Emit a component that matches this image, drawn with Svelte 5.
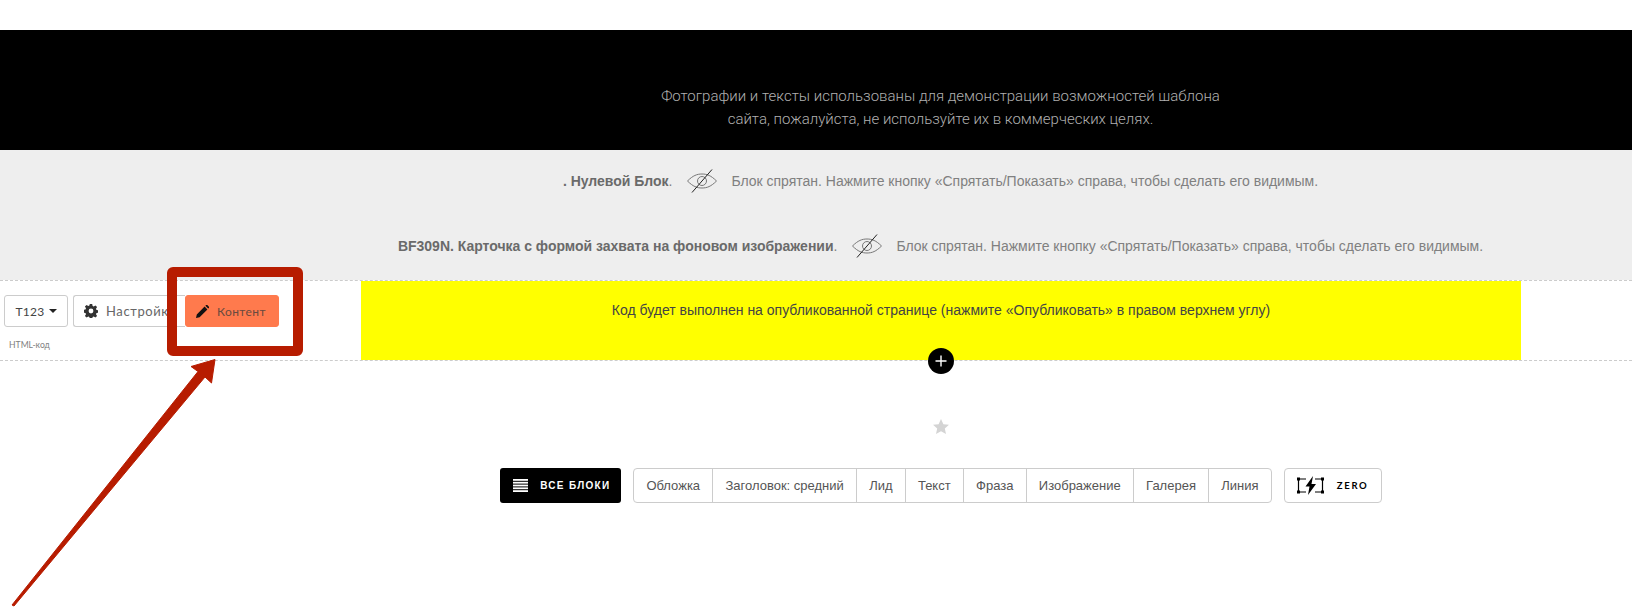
<script lang="ts">
  const tabs = ['Обложка', 'Заголовок: средний', 'Лид', 'Текст', 'Фраза', 'Изображение', 'Галерея', 'Линия']
  const hidden = [
    { title: '. Нулевой Блок' },
    { title: 'BF309N. Карточка с формой захвата на фоновом изображении' },
  ]
</script>

<style>
  :global(body) { margin: 0; background: #fff; }

  .page {
    position: relative;
    width: 1632px;
    height: 613px;
    overflow: hidden;
    padding-top: 30px;
    box-sizing: border-box;
    font-family: "Liberation Sans", Arial, sans-serif;
  }

  .notice {
    height: 120px;
    box-sizing: border-box;
    background: #000;
    padding: 55px 111px 0 360px;
    text-align: center;
    font-family: Roboto, sans-serif;
    font-weight: 300;
    font-size: 15px;
    line-height: 23px;
    color: #b0b0b0;
  }

  .hidden-blocks {
    height: 130px;
    background: #eee;
    padding-left: 360px;
    padding-right: 111px;
  }
  .hidden-row {
    height: 65px;
    padding-bottom: 3px;
    box-sizing: border-box;
    display: flex;
    align-items: center;
    justify-content: center;
    font-size: 14px;
    letter-spacing: -0.01px;
    color: #808080;
    white-space: nowrap;
  }
  .hidden-row b { color: #6a6a6a; }
  .eye { margin: 0 14px 0 15px; flex: none; }

  .html-row {
    display: flex;
    height: 81px;
    box-sizing: border-box;
    border-top: 1px dashed #ccc;
    border-bottom: 1px dashed #ccc;
  }
  .panel {
    width: 361px;
    flex: none;
    padding: 14px 0 0 4px;
    box-sizing: border-box;
    font-family: Lato, sans-serif;
  }
  .tools { display: flex; height: 32px; }
  .tool {
    box-sizing: border-box;
    height: 32px;
    border: 1px solid #ccc;
    border-radius: 3px;
    background: #fff;
    display: flex;
    align-items: center;
    font-size: 13px;
    color: #666;
    letter-spacing: 0.6px;
    white-space: nowrap;
  }
  .type { width: 64px; justify-content: center; gap: 4px; color: #444; margin-right: 5px; font-size: 12px; letter-spacing: 0.3px; }
  .caret { width: 0; height: 0; border: 4px solid transparent; border-top-color: #222; border-bottom: 0; }
  .settings { width: 112px; padding-left: 10px; gap: 8px; overflow: hidden; border-right: 0; border-radius: 3px 0 0 3px; }
  .content {
    width: 94px;
    padding-left: 10px;
    gap: 8px;
    background: #ff7a4d;
    border-color: #ff7a4d;
    color: #6a4a3f;
    font-size: 12px;
    letter-spacing: 0.4px;
  }
  .label { margin: 12px 0 0 5px; font-size: 8.6px; line-height: 12px; color: #808080; }

  .code {
    width: 1160px;
    background: #ff0;
    padding-top: 17px;
    box-sizing: border-box;
    text-align: center;
    font-size: 14px;
    line-height: 24px;
    color: #444;
  }

  .add {
    position: absolute;
    left: 928px;
    top: 348px;
    width: 26px;
    height: 26px;
    border-radius: 50%;
    background: #000;
    display: flex;
    align-items: center;
    justify-content: center;
  }

  .library {
    padding-left: 361px;
    padding-right: 111px;
    display: flex;
    flex-direction: column;
    align-items: center;
  }
  .star { margin-top: 58px; display: block; }

  .bar { display: flex; margin-top: 34px; height: 35px; }
  .all {
    width: 121px;
    box-sizing: border-box;
    background: #000;
    border-radius: 3px;
    display: flex;
    align-items: center;
    padding-left: 13px;
    gap: 12px;
    color: #fff;
    font-size: 10px;
    font-weight: 700;
    letter-spacing: 1.3px;
    margin-right: 12px;
  }
  .tabs {
    display: flex;
    border: 1px solid #ccc;
    border-radius: 4px;
    margin-right: 12px;
  }
  .tab {
    padding: 0 12.2px;
    display: flex;
    align-items: center;
    font-size: 13px;
    color: #555;
    border-left: 1px solid #ccc;
    white-space: nowrap;
  }
  .tab:first-child { border-left: 0; }
  .zero {
    width: 98px;
    box-sizing: border-box;
    border: 1px solid #ccc;
    border-radius: 4px;
    display: flex;
    align-items: center;
    padding-left: 12px;
    gap: 13px;
    font-family: Lato, sans-serif;
    font-weight: 700;
    font-size: 9.5px;
    letter-spacing: 1.7px;
    color: #000;
  }

  .frame {
    position: absolute;
    left: 167px;
    top: 267px;
    width: 136px;
    height: 89px;
    box-sizing: border-box;
    border: 10px solid #b71c00;
    border-radius: 6px;
    pointer-events: none;
  }
  .arrow { position: absolute; left: 0; top: 340px; }
</style>

<div class="page">
  <div class="notice">
    Фотографии и тексты использованы для демонстрации возможностей шаблона<br />
    сайта, пожалуйста, не используйте их в коммерческих целях.
  </div>

  <div class="hidden-blocks">
    {#each hidden as block}
      <div class="hidden-row">
        <b>{block.title}</b>.
        <svg class="eye" width="30" height="24" viewBox="0 0 30 24" fill="none" stroke="#777" stroke-width="1">
          <path d="M0.500 12 C6 6.500 10 5 15 5 C20 5 24 6.500 29.500 12 C24 17.500 20 19 15 19 C10 19 6 17.500 0.500 12 Z" />
          <circle cx="15" cy="12" r="4.500" />
          <path d="M5 23.500 L25 0.500" stroke="#222" />
        </svg>
        Блок спрятан. Нажмите кнопку «Спрятать/Показать» справа, чтобы сделать его видимым.
      </div>
    {/each}
  </div>

  <div class="html-row">
    <div class="panel">
      <div class="tools">
        <div class="tool type">T123 <span class="caret"></span></div>
        <div class="tool settings">
          <svg width="14" height="14" viewBox="0 0 14 14">
            <path fill="#333" fill-rule="evenodd" d="M5.800 0h2.400l.4 2 1.100.5 1.700-1.100 1.700 1.700-1.100 1.700.5 1.100 2 .4v2.400l-2 .4-.5 1.100 1.100 1.700-1.700 1.700-1.700-1.100-1.100.5-.4 2H5.800l-.4-2-1.100-.5-1.700 1.100-1.700-1.700 1.100-1.700-.5-1.100-2-.4V5.800l2-.4.5-1.100-1.100-1.700 1.700-1.700 1.700 1.100 1.100-.5zM7 4.600a2.400 2.400 0 1 0 0 4.800 2.400 2.400 0 0 0 0-4.800z" />
          </svg>
          Настройки
        </div>
        <div class="tool content">
          <svg width="13" height="13" viewBox="0 0 13 13">
            <path fill="#111" d="M0 13l.8-3.600L8.600 1.600l2.800 2.800-7.800 7.800zM9.400.8l.7-.7a.9.9 0 0 1 1.200 0l1.600 1.600a.9.9 0 0 1 0 1.200l-.7.7z" />
          </svg>
          Контент
        </div>
      </div>
      <div class="label">HTML-код</div>
    </div>
    <div class="code">Код будет выполнен на опубликованной странице (нажмите «Опубликовать» в правом верхнем углу)</div>
  </div>

  <div class="add">
    <svg width="12" height="12" viewBox="0 0 12 12" stroke="#fff" stroke-width="1.400"><path d="M6 0.500v11M0.500 6h11" /></svg>
  </div>

  <div class="library">
    <svg class="star" width="16" height="15" viewBox="0 0 16 15">
      <path fill="#d4d4d4" d="M8 0l2.400 5.200 5.600.6-4.200 3.800 1.200 5.400L8 12.300 3 15l1.200-5.400L0 5.800l5.600-.6z" />
    </svg>
    <div class="bar">
      <div class="all">
        <svg width="15" height="13" viewBox="0 0 15 13" fill="#fff">
          <rect y="0" width="15" height="1.800" /><rect y="2.800" width="15" height="1.800" /><rect y="5.600" width="15" height="1.800" /><rect y="8.400" width="15" height="1.800" /><rect y="11.200" width="15" height="1.800" />
        </svg>
        ВСЕ БЛОКИ
      </div>
      <div class="tabs">
        {#each tabs as tab}
          <div class="tab">{tab}</div>
        {/each}
      </div>
      <div class="zero">
        <svg width="27" height="19" viewBox="0 0 27 19">
          <path fill="none" stroke="#000" stroke-width="1.200" d="M9 3H1.500v13H9M18 3h7.500v13H18" />
          <path fill="#000" d="M0 1.500h3v3H0zM24 1.500h3v3h-3zM0 14.500h3v3H0zM24 14.500h3v3h-3z" />
          <path fill="#000" d="M16 0L8.500 10.500h4L11 19 19 8h-4.500z" />
        </svg>
        ZERO
      </div>
    </div>
  </div>

  <div class="frame"></div>
  <svg class="arrow" width="240" height="273" viewBox="0 340 240 273">
    <path fill="#b71c00" stroke="#b71c00" stroke-width="1" stroke-linejoin="round" d="M12 605 L14 606 L205 377 L211.500 383 L215 359.500 L191 366.500 L198 371.500 Z" />
  </svg>
</div>
